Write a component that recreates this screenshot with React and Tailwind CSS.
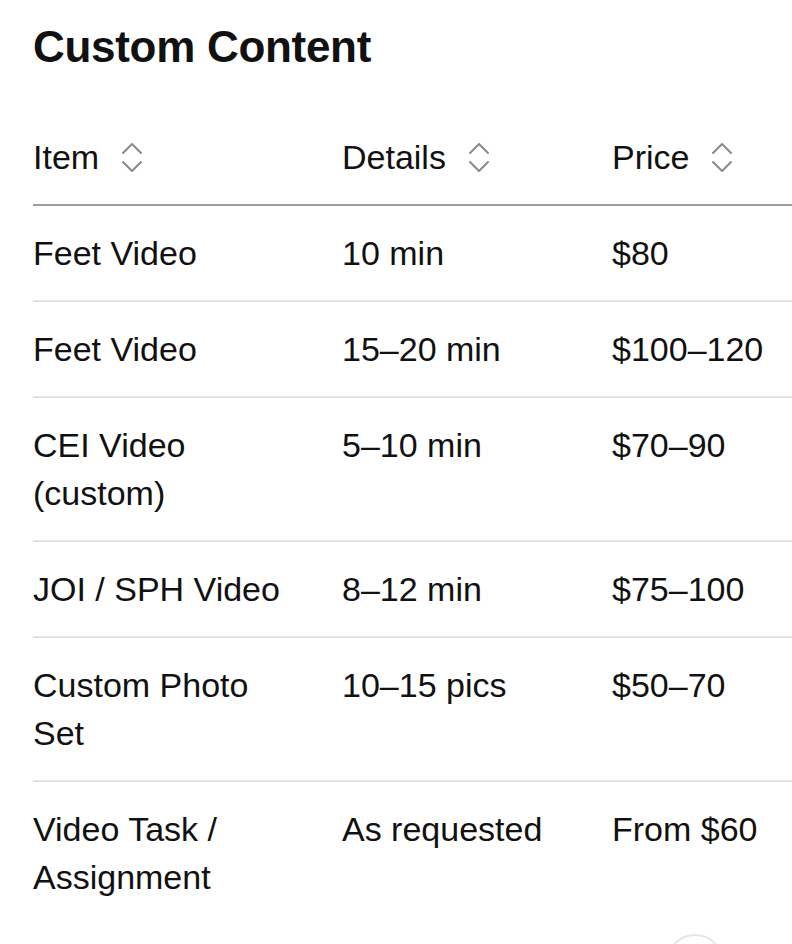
import React from "react";

const rows = [
  { item: ["Feet Video"], details: "10 min", price: "$80" },
  { item: ["Feet Video"], details: "15–20 min", price: "$100–120" },
  { item: ["CEI Video", "(custom)"], details: "5–10 min", price: "$70–90" },
  { item: ["JOI / SPH Video"], details: "8–12 min", price: "$75–100" },
  { item: ["Custom Photo", "Set"], details: "10–15 pics", price: "$50–70" },
  { item: ["Video Task /", "Assignment"], details: "As requested", price: "From $60" },
];

function SortIcon() {
  return (
    <svg width="22" height="32" viewBox="0 0 22 32" className="ml-[22px] shrink-0">
      <polyline points="2,12 11,3 20,12" fill="none" stroke="#8a8a8a" strokeWidth="2" strokeLinecap="round" strokeLinejoin="round" />
      <polyline points="2,21 11,30 20,21" fill="none" stroke="#8a8a8a" strokeWidth="2" strokeLinecap="round" strokeLinejoin="round" />
    </svg>
  );
}

function HeaderCell({ label, width }) {
  return (
    <th className={`${width} py-[23px] text-left font-normal align-top`}>
      <div className="flex items-center">
        <span>{label}</span>
        <SortIcon />
      </div>
    </th>
  );
}

export default function App() {
  return (
    <div
      className="relative w-[792px] h-[944px] overflow-hidden bg-white text-[#111]"
      style={{ fontFamily: '"Liberation Sans", Arial, sans-serif' }}
    >
      <div className="pl-[33px] pt-[25px]">
        <h1 className="text-[44px] leading-[44px] font-bold tracking-[-0.3px]">Custom Content</h1>

        <table className="mt-[41px] w-[759px] border-collapse table-fixed text-[34px] leading-[48px]">
          <thead>
            <tr className="border-b-2 border-[#9c9c9c]">
              <HeaderCell label="Item" width="w-[309px]" />
              <HeaderCell label="Details" width="w-[270px]" />
              <HeaderCell label="Price" width="" />
            </tr>
          </thead>
          <tbody>
            {rows.map((r, i) => (
              <tr key={i} className={i < rows.length - 1 ? "border-b-2 border-[#e2e2e2]" : ""}>
                <td className="py-[23px] align-top">
                  {r.item.map((line, j) => (
                    <div key={j}>{line}</div>
                  ))}
                </td>
                <td className="py-[23px] align-top whitespace-nowrap">{r.details}</td>
                <td className="py-[23px] align-top whitespace-nowrap">{r.price}</td>
              </tr>
            ))}
          </tbody>
        </table>
      </div>

      {/* floating button peeking at the bottom */}
      <div className="absolute left-[666px] top-[934px] w-[58px] h-[58px] rounded-full border-2 border-[#e6e6e6] bg-white" />
    </div>
  );
}
